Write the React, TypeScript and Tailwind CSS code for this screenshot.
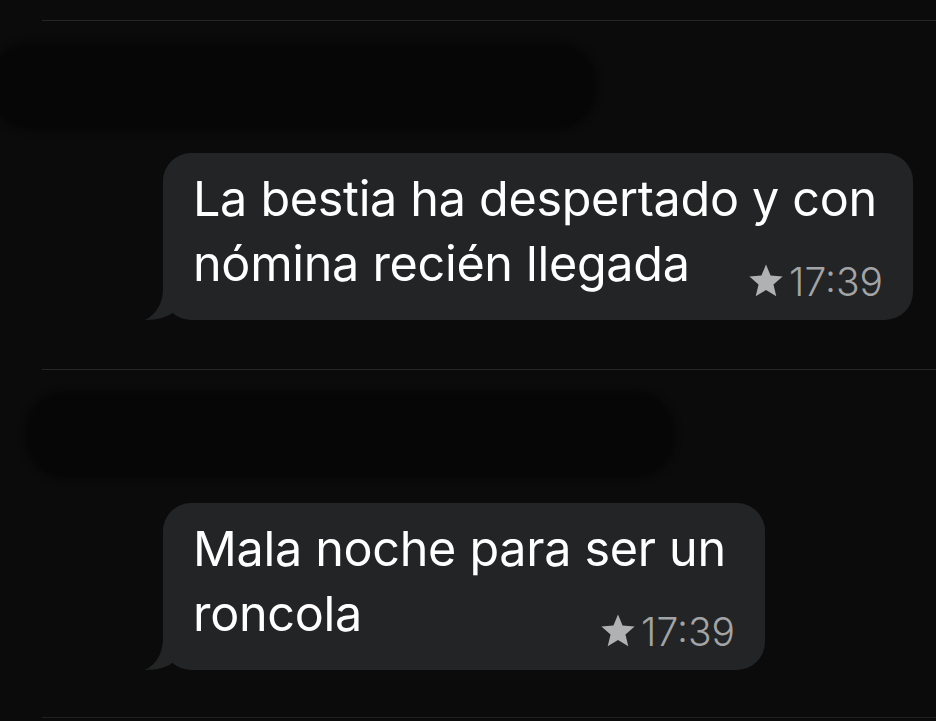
import React from 'react';

interface Msg {
  first: string;
  second: string;
  time: string;
  width: string;
}

const messages: Msg[] = [
  { first: 'La bestia ha despertado y con', second: 'nómina recién llegada', time: '17:39', width: 'w-[750px]' },
  { first: 'Mala noche para ser un', second: 'roncola', time: '17:39', width: 'w-[602px]' },
];

function Tail() {
  return (
    <svg
      className="absolute bottom-0 -left-[18px]"
      width="40"
      height="42"
      viewBox="0 0 40 42"
    >
      <path d="M18 0 L18 12 Q17 33 0 42 Q20 42 30 33 L30 0 Z" fill="#232425" />
    </svg>
  );
}

function Bubble({ msg }: { msg: Msg }) {
  return (
    <div className={`relative ml-[163px] ${msg.width} rounded-[28px] bg-[#232425] pl-[30px] pr-[30px] pt-[13px] pb-[24px]`}>
      <Tail />
      <div className="relative text-[48.5px] leading-[65px] text-white tracking-[-0.3px]">
        {msg.first}
      </div>
      <div className="relative flex items-end justify-between">
        <span className="text-[48.5px] leading-[65px] text-white tracking-[-0.3px]">{msg.second}</span>
        <span className="-mb-[9px] flex items-center gap-[4px] text-[39px] font-light leading-[46px] text-[#a3a4a5]">
          <svg width="38" height="38" viewBox="0 0 24 24" className="-mt-[2px]">
            <path
              d="M12 1.5 L14.9 8.6 L22.5 9.2 L16.7 14.2 L18.5 21.7 L12 17.7 L5.5 21.7 L7.3 14.2 L1.5 9.2 L9.1 8.6 Z"
              fill="#b0b1b2"
            />
          </svg>
          {msg.time}
        </span>
      </div>
    </div>
  );
}

function Hidden({ left, width }: { left: string; width: string }) {
  return <div className={`${left} ${width} h-[88px] rounded-[40px] bg-[#060606] blur-[3px]`} />;
}

export default function App() {
  return (
    <div
      className="h-[721px] w-[936px] overflow-hidden bg-[#0b0b0b]"
      style={{ fontFamily: 'Inter, "Liberation Sans", sans-serif' }}
    >
      <div className="h-[20px]" />
      <div className="ml-[42px] h-px bg-[#262626]" />
      <div className="pt-[21px]">
        <Hidden left="-ml-[10px]" width="w-[607px]" />
      </div>
      <div className="pt-[23px]">
        <Bubble msg={messages[0]} />
      </div>
      <div className="mt-[49px] ml-[42px] h-px bg-[#262626]" />
      <div className="pt-[21px]">
        <Hidden left="ml-[25px]" width="w-[650px]" />
      </div>
      <div className="pt-[24px]">
        <Bubble msg={messages[1]} />
      </div>
      <div className="mt-[47px] ml-[42px] h-px bg-[#1f1f1f]" />
    </div>
  );
}
